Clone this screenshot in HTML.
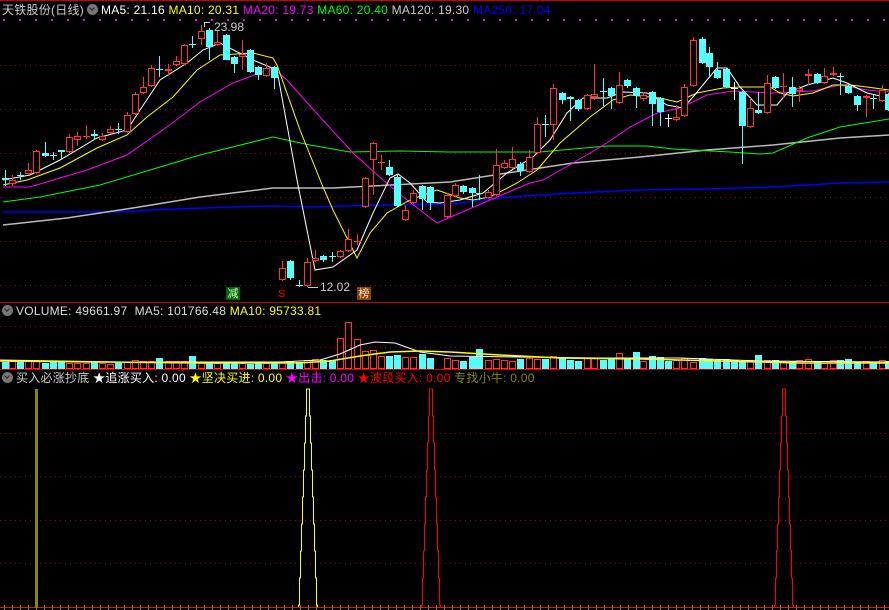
<!DOCTYPE html>
<html><head><meta charset="utf-8"><style>
body{margin:0;background:#000;width:889px;height:610px;overflow:hidden;font-family:"Liberation Sans","Noto Sans CJK SC",sans-serif}
svg{position:absolute;left:0;top:0}
.t{position:absolute;font-size:12px;white-space:nowrap;line-height:14px}
.h{letter-spacing:0.25px}
.ic{display:inline-block;width:11px;height:11px;border-radius:50%;background:#777;vertical-align:-1px;margin:0 3px;position:relative}
.ic:after{content:"";position:absolute;left:3px;top:2px;width:3px;height:3px;border-right:1.5px solid #222;border-bottom:1.5px solid #222;transform:rotate(45deg)}
</style></head><body>
<svg id="s" width="889" height="610" xmlns="http://www.w3.org/2000/svg" shape-rendering="crispEdges"></svg>
<div class="t h" style="left:2px;top:3px;color:#ccc">天铁股份(日线)<span class="ic"></span><span style="color:#fff">MA5: 21.16 </span><span style="color:#ff0">MA10: 20.31 </span><span style="color:#f0f">MA20: 19.73 </span><span style="color:#0f0">MA60: 20.40 </span><span style="color:#ccc">MA120: 19.30 </span><span style="color:#00f">MA250: 17.04</span></div>
<div class="t" style="left:214px;top:20px;color:#ccc">23.98</div>
<div class="t" style="left:320px;top:280px;color:#ccc">12.02</div>
<div class="t" style="left:226px;top:287px;width:14px;height:13px;background:#060;color:#cfc;font-size:11px;text-align:center">减</div>
<div class="t" style="left:278px;top:287px;color:#f00;font-size:11px">S</div>
<div class="t" style="left:357px;top:287px;width:14px;height:13px;background:#840;color:#fdc;font-size:11px;text-align:center">榜</div>
<div class="t h" style="left:2px;top:304px;color:#ddd"><span class="ic" style="margin-left:0"></span>VOLUME: 49661.97 &nbsp;MA5: 101766.48 <span style="color:#ff0">MA10: 95733.81</span></div>
<div class="t h" style="left:2px;top:371px;color:#ccc"><span class="ic" style="margin-left:0"></span>买入必涨抄底 <span style="color:#fff">★追涨买入: 0.00</span> <span style="color:#ff0">★坚决买进: 0.00</span> <span style="color:#f0f">★出击: 0.00</span> <span style="color:#f00">★波段买入: 0.00</span> <span style="color:#880">专找小牛: 0.00</span></div>
<script>
var s=document.getElementById('s'),h='';
function L(x1,y1,x2,y2,c,w,d){h+='<line x1="'+x1+'" y1="'+y1+'" x2="'+x2+'" y2="'+y2+'" stroke="'+c+'" stroke-width="'+(w||1)+'"'+(d?' stroke-dasharray="'+d+'"':'')+'/>';}
function P(p,c,w,cr){h+='<polyline fill="none" stroke="'+c+'" stroke-width="'+(w||1)+'"'+(cr?'':' shape-rendering="auto"')+' points="'+p.map(function(a){return a.join(',')}).join(' ')+'"/>';}
L(0,0.5,889,0.5,'#c00');L(0,302.5,889,302.5,'#c00');L(0,369.5,889,369.5,'#c00');
[65,109,153,197,241,285].forEach(function(y){L(0,y+.5,889,y+.5,'#900',1,'1 4')});
[326,347].forEach(function(y){L(0,y+.5,889,y+.5,'#900',1,'1 4')});
[433,476,520,563].forEach(function(y){L(0,y+.5,889,y+.5,'#900',1,'1 4')});
for(var x=3;x<889;x+=16)h+='<rect x="'+x+'" y="19" width="2" height="2" fill="#f0f"/>';
P([[3,212],[115,212],[150,210],[230,207],[273,206],[310,207],[380,205],[450,204],[507,197],[573,193],[640,190],[707,189],[773,187],[840,183],[889,182]],'#00f',1.5);
P([[3,225],[67,218],[133,208],[200,197],[273,188],[333,188],[450,182],[507,173],[573,163],[640,157],[707,150],[773,145],[840,138],[889,135]],'#bbb',1.5);
P([[3,202],[40,197],[100,185],[150,170],[200,155],[273,137],[310,145],[350,152],[400,151],[450,152],[540,152],[607,146],[647,146],[673,149],[730,152],[760,154],[773,153],[807,138],[840,127],[889,119]],'#0f0');
P([[3,187],[30,187],[60,178],[87,170],[127,155],[167,127],[200,102],[233,83],[273,68],[287,80],[320,117],[353,153],[383,180],[407,200],[437,223],[460,213],[490,200],[530,183],[543,180],[573,163],[607,143],[630,127],[657,113],[680,108],[707,95],[733,91],[773,93],[813,91],[840,85],[867,90],[889,92]],'#f0f');
P([[3,185],[27,180],[60,168],[97,148],[127,135],[147,117],[173,97],[197,70],[220,55],[253,53],[273,58],[277,65],[300,130],[323,187],[333,210],[357,258],[370,233],[387,213],[410,200],[437,190],[460,198],[473,200],[490,197],[517,183],[537,170],[560,143],[590,117],[613,100],[630,95],[660,98],[677,102],[697,93],[723,88],[740,87],[770,87],[780,93],[793,96],[813,93],[833,85],[850,85],[867,87],[889,90]],'#ff0');
P([[3,180],[30,175],[60,160],[97,138],[127,130],[140,110],[160,80],[187,63],[203,50],[220,43],[253,60],[277,70],[297,180],[315,270],[333,267],[357,250],[373,213],[390,178],[398,174],[410,183],[427,202],[440,203],[460,200],[483,193],[507,173],[533,157],[550,140],[567,113],[583,98],[607,98],[623,92],[647,93],[667,105],[683,108],[693,97],[707,80],[717,68],[727,68],[740,87],[757,105],[777,105],[787,93],[807,85],[833,78],[847,83],[867,93],[889,98]],'#fff');
var C=[[5,178,180,170,186,'c'],[12,180,184,175,186,'r'],[20,175,176,172,180,'c'],[28,170,174,163,175,'r'],[36,151,173,150,174,'r'],[45,153,156,142,157,'c'],[53,155,156,152,160,'c'],[61,150,152,150,160,'c'],[69,137,152,134,153,'r'],[77,136,140,132,146,'r'],[86,136,137,125,139,'r'],[94,134,136,130,140,'c'],[102,136,140,133,141,'r'],[110,129,133,126,134,'r'],[118,129,130,123,134,'c'],[127,115,132,112,133,'r'],[135,94,114,92,115,'r'],[143,87,93,77,94,'r'],[151,68,86,65,87,'r'],[159,69,70,56,77,'c'],[168,69,71,64,76,'r'],[176,61,65,56,66,'r'],[184,45,64,44,65,'r'],[192,44,45,36,48,'c'],[201,31,39,25,45,'r'],[209,30,47,28,60,'c'],[217,42,45,30,46,'r'],[226,35,60,34,60,'c'],[234,57,64,56,73,'c'],[242,54,57,40,70,'r'],[250,50,72,49,73,'c'],[258,67,75,66,80,'c'],[266,68,76,63,77,'r'],[274,67,78,66,89,'c'],[282,268,280,261,281,'r'],[290,261,278,260,280,'c'],[299,285,286,280,287,'c'],[307,262,286,258,287,'r'],[315,258,261,250,262,'r'],[323,256,260,255,262,'c'],[332,256,257,252,262,'c'],[340,251,257,250,258,'r'],[348,239,251,229,252,'r'],[357,241,242,234,245,'r'],[365,178,207,177,208,'r'],[373,143,160,142,195,'r'],[381,162,163,155,170,'r'],[389,167,175,160,176,'c'],[397,177,206,175,207,'c'],[405,210,220,205,221,'r'],[413,193,203,190,204,'r'],[422,186,199,185,210,'c'],[430,187,203,186,210,'c'],[447,195,217,193,218,'r'],[455,185,196,183,197,'r'],[463,186,192,185,194,'c'],[472,188,193,187,207,'c'],[479,193,194,175,200,'c'],[488,192,198,190,199,'r'],[496,165,195,149,196,'r'],[504,163,168,160,169,'r'],[512,159,168,147,169,'r'],[520,164,171,162,176,'c'],[529,157,172,150,173,'r'],[537,124,153,117,154,'r'],[545,124,125,115,137,'c'],[553,88,125,84,140,'r'],[562,93,100,92,104,'c'],[570,97,99,96,121,'c'],[578,100,109,99,111,'c'],[587,95,109,94,110,'r'],[594,94,97,64,100,'r'],[603,91,92,78,106,'c'],[611,88,96,87,109,'c'],[619,85,103,72,104,'r'],[627,80,86,79,88,'c'],[636,88,96,87,108,'c'],[643,95,99,92,101,'r'],[652,92,104,91,126,'c'],[660,98,112,97,126,'c'],[668,118,119,114,127,'w'],[676,117,120,105,121,'r'],[684,87,116,84,117,'r'],[693,40,86,37,87,'r'],[702,39,63,37,64,'c'],[709,53,67,47,77,'c'],[717,70,78,62,79,'c'],[726,69,87,68,88,'c'],[734,88,89,82,100,'w'],[742,92,126,91,164,'c'],[750,108,127,98,128,'r'],[758,110,113,92,114,'c'],[767,83,113,75,114,'r'],[775,77,88,76,89,'c'],[783,86,87,73,98,'r'],[792,87,94,77,107,'c'],[799,88,91,86,102,'r'],[808,74,76,69,85,'r'],[817,74,83,73,84,'c'],[824,76,83,68,84,'r'],[833,73,75,67,76,'r'],[840,76,77,73,95,'c'],[848,86,93,85,94,'c'],[857,96,105,95,111,'c'],[866,96,98,95,117,'r'],[873,98,99,95,109,'c'],[882,90,101,85,102,'r'],[888,94,110,93,111,'c']];
var V=[7,8,7,9,8,6,7,7,6,6,6,7,6,5,6,7,9,8,8,11,8,8,8,13,7,6,6,7,6,6,5,7,6,7,7,8,7,9,10,9,9,31,47,30,18,19,13,13,14,12,12,15,11,11,9,8,12,20,9,10,9,8,10,11,10,10,13,12,9,8,11,11,9,10,16,11,17,8,13,12,8,9,11,7,11,10,9,10,9,8,9,14,9,9,8,8,9,10,8,8,9,9,10];
C.forEach(function(c,k){var x=c[0],col=c[5]=='r'?'#f33':(c[5]=='w'?'#fff':'#5ff');
 L(x+.5,c[3],x+.5,c[4],col);
 if(c[2]-c[1]<=1){L(x-3,c[1]+.5,x+4,c[1]+.5,col);}
 else if(c[5]=='r'){h+='<rect x="'+(x-2.5)+'" y="'+(c[1]+.5)+'" width="6" height="'+(c[2]-c[1]-1)+'" fill="#000" stroke="#f33"/>';}
 else h+='<rect x="'+(x-3)+'" y="'+c[1]+'" width="7" height="'+(c[2]-c[1])+'" fill="'+col+'"/>';
 var v=V[k%V.length];
 if(c[5]=='r')h+='<rect x="'+(x-2.5)+'" y="'+(369.5-v)+'" width="6" height="'+(v-1)+'" fill="none" stroke="#f33"/>';
 else h+='<rect x="'+(x-3)+'" y="'+(369-v)+'" width="7" height="'+v+'" fill="#5ff"/>';
});
P([[0,360],[60,361],[120,362],[200,362],[280,362],[320,360],[340,354],[360,345],[375,342],[395,343],[420,352],[450,356],[520,357],[600,358],[680,358],[760,361],[889,362]],'#fff');
P([[0,361],[100,362],[200,363],[300,363],[330,361],[360,356],[390,352],[420,351],[450,352],[500,355],[560,358],[640,359],[720,361],[800,363],[889,363]],'#ff0',1.5);
L(0,607.5,889,607.5,'#f00');
for(var x=4;x<889;x+=8)L(x+.5,605,x+.5,610,'#880');
h+='<rect x="35" y="389" width="3" height="219" fill="#880"/>';
function peak(cx,col){var pts=[],st=27;for(var j=8;j>=0;j--){var y=389+j*st;pts.push([cx-1-j+.5,Math.min(y+st,607)],[cx-1-j+.5,y]);}
 pts.push([cx+1.5,389]);for(var j=0;j<=8;j++){var y=389+j*st;pts.push([cx+2+j+.5,y],[cx+2+j+.5,Math.min(y+st,607)]);}
 P(pts,col,1,true);}
peak(307,'#ff0');peak(430,'#f00');peak(783,'#f00');
L(204,22.5,210,22.5,'#ccc');L(204.5,22,204.5,27,'#ccc');L(308,287.5,318,287.5,'#ccc');
s.innerHTML=h;
</script>
</body></html>
